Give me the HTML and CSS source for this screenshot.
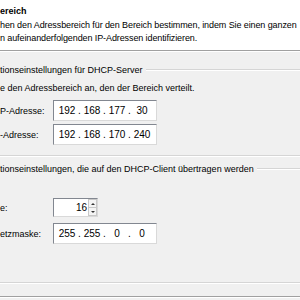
FILE: index.html
```html
<!DOCTYPE html>
<html lang="de">
<head>
    <meta charset="UTF-8">
    <title>Bereich</title>
    <link rel="stylesheet" href="styles.css">
</head>
<body>
    <div class="wizard">
        <div class="header">
            <div class="header-title">ereich</div>
            <p class="header-text">hen den Adressbereich für den Bereich bestimmen, indem Sie einen ganzen<br>n aufeinanderfolgenden IP-Adressen identifizieren.</p>
        </div>

        <section class="group group-server">
            <div class="group-title"><span>tionseinstellungen für DHCP-Server</span></div>
            <p class="group-text">e den Adressbereich an, den der Bereich verteilt.</p>
            <div class="field field-first">
                <label>P-Adresse:</label>
                <div class="ip">
                    <span class="octet">192</span><span class="dot">.</span>
                    <span class="octet">168</span><span class="dot">.</span>
                    <span class="octet">177</span><span class="dot">.</span>
                    <span class="octet">30</span>
                </div>
            </div>
            <div class="field">
                <label>-Adresse:</label>
                <div class="ip">
                    <span class="octet">192</span><span class="dot">.</span>
                    <span class="octet">168</span><span class="dot">.</span>
                    <span class="octet">170</span><span class="dot">.</span>
                    <span class="octet">240</span>
                </div>
            </div>
        </section>

        <section class="group group-client">
            <div class="group-title"><span>tionseinstellungen, die auf den DHCP-Client übertragen werden</span></div>
            <div class="field field-spin">
                <label>e:</label>
                <div class="spin">
                    <span class="spin-value">16</span>
                    <span class="spin-buttons">
                        <span class="spin-btn"><span class="arrow-up"></span></span>
                        <span class="spin-btn"><span class="arrow-down"></span></span>
                    </span>
                </div>
            </div>
            <div class="field field-mask">
                <label>etzmaske:</label>
                <div class="ip">
                    <span class="octet">255</span><span class="dot">.</span>
                    <span class="octet">255</span><span class="dot">.</span>
                    <span class="octet">0</span><span class="dot">.</span>
                    <span class="octet">0</span>
                </div>
            </div>
        </section>

        <div class="footer"></div>
    </div>
</body>
</html>
```

FILE: styles.css
```css
body {
    margin: 0;
    background-color: #f0f0f0;
    font-family: "Liberation Sans", Arial, sans-serif;
    font-size: 9px;
    color: #000;
    width: 300px;
    height: 300px;
    overflow: hidden;
}
.wizard {
    white-space: nowrap;
}
.header {
    background-color: #fff;
    height: 51px;
    box-sizing: border-box;
    padding-top: 5px;
    border-bottom: 1px solid #a0a0a0;
    box-shadow: 0 1px 0 #fff;
}
.header-title {
    font-weight: bold;
    line-height: 12px;
}
.header-text {
    margin: 2px 0 0;
    line-height: 13px;
    letter-spacing: -0.1px;
}
.group {
    border-bottom: 1px solid #d5d5d5;
    box-shadow: 0 1px 0 #fff;
}
.group-server {
    margin-top: 13px;
    padding-bottom: 10px;
}
.group-client {
    margin-top: 7px;
    padding-bottom: 38px;
}
.group-title {
    display: flex;
    align-items: center;
    line-height: 12px;
}
.group-title::after {
    content: "";
    flex: 1;
    margin-left: 3px;
    border-top: 1px solid #d5d5d5;
    border-bottom: 1px solid #fff;
}
.group-text {
    margin: 6px 0 0;
    line-height: 12px;
}
.field {
    display: flex;
    align-items: center;
    margin-top: 3px;
}
.field-first {
    margin-top: 6px;
}
.field-spin {
    margin-top: 23px;
}
.field-mask {
    margin-top: 6px;
}
.field label {
    width: 53px;
    flex: none;
}
.ip {
    width: 104px;
    height: 21px;
    box-sizing: border-box;
    display: flex;
    align-items: center;
    background-color: #fff;
    border: 1px solid;
    border-color: #828790 #d9d9d9 #d9d9d9 #828790;
    padding-left: 2px;
    font-size: 10px;
}
.octet {
    width: 22px;
    text-align: center;
}
.dot {
    width: 3px;
    text-align: center;
}
.spin {
    width: 45px;
    height: 19px;
    box-sizing: border-box;
    display: flex;
    background-color: #fff;
    border: 1px solid;
    border-color: #828790 #d9d9d9 #d9d9d9 #828790;
    font-size: 10px;
}
.spin-value {
    flex: 1;
    text-align: right;
    line-height: 17px;
    padding-right: 1px;
}
.spin-buttons {
    width: 9px;
    display: flex;
    flex-direction: column;
}
.spin-btn {
    flex: 1;
    display: flex;
    align-items: center;
    justify-content: center;
    background-color: #f4f4f4;
    border: 1px solid #c8c8c8;
}
.spin-btn + .spin-btn {
    border-top: none;
}
.arrow-up {
    border-left: 2px solid transparent;
    border-right: 2px solid transparent;
    border-bottom: 2px solid #333;
}
.arrow-down {
    border-left: 2px solid transparent;
    border-right: 2px solid transparent;
    border-top: 2px solid #333;
}
.footer {
    margin-top: 13px;
    border-top: 1px solid #a0a0a0;
    box-shadow: 0 1px 0 #fff;
}
```
